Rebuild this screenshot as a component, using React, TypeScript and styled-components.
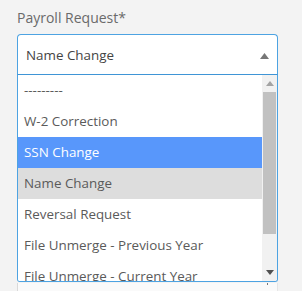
import React from "react";
import styled, { createGlobalStyle } from "styled-components";

const Global = createGlobalStyle`
  html, body { margin: 0; padding: 0; background: #f3f3f3; }
  body { font-family: "Open Sans", "Liberation Sans", sans-serif; }
`;

const Page = styled.div`
  padding: 8px 0 0 17px;
  width: 261px;
  height: 283px;
  overflow: hidden;
`;

const Label = styled.div`
  font-size: 14px;
  color: #6a6a6a;
  line-height: 20px;
  height: 26px;
`;

const Select = styled.div`
  height: 39px;
  border: 1px solid #4da3e2;
  border-bottom-color: #3f95d6;
  border-radius: 4px 4px 0 0;
  background: #fff;
  display: flex;
  align-items: center;
  padding: 0 8px 0 8px;
  font-size: 13.4px;
  color: #444;
`;

const Value = styled.span`
  flex: 1;
`;

const Drop = styled.div`
  height: 206px;
  border: 1px solid #4da3e2;
  border-top: none;
  border-radius: 0 0 3px 3px;
  background: #fff;
  display: flex;
  overflow: hidden;
`;

const List = styled.ul`
  list-style: none;
  margin: 0;
  padding: 0;
  flex: 1;
  overflow: hidden;
`;

const Item = styled.li<{ $state?: "hover" | "selected" }>`
  height: 31px;
  line-height: 31px;
  padding-left: 6px;
  font-size: 13.4px;
  white-space: nowrap;
  color: ${(p) => (p.$state === "hover" ? "#fff" : "#5a5a5a")};
  background: ${(p) =>
    p.$state === "hover" ? "#5897fb" : p.$state === "selected" ? "#dddddd" : "#fff"};
`;

const Scrollbar = styled.div`
  width: 15px;
  background: #f1f1f1;
  display: flex;
  flex-direction: column;
  align-items: center;
`;

const ArrowBtn = styled.div`
  height: 17px;
  width: 15px;
  display: flex;
  align-items: center;
  justify-content: center;
`;

const Thumb = styled.div`
  width: 13px;
  height: 142px;
  background: #c1c1c1;
`;

const Under = styled.div`
  margin-top: 1px;
  height: 10px;
  background: #fafafa;
  border-left: 1px solid #d9d9d9;
  border-right: 1px solid #e6e6e6;
  position: relative;
`;

const Tick = styled.div`
  position: absolute;
  right: 9px;
  top: 0;
  width: 1px;
  height: 2px;
  background: #777;
`;

const Tri = ({ up, color }: { up?: boolean; color: string }) => (
  <svg width="8" height="5" viewBox="0 0 8 5">
    <path d={up ? "M0 5 L4 0 L8 5 Z" : "M0 0 L8 0 L4 5 Z"} fill={color} />
  </svg>
);

export default function App() {
  const items: { text: string; state?: "hover" | "selected" }[] = [
    { text: "---------" },
    { text: "W-2 Correction" },
    { text: "SSN Change", state: "hover" },
    { text: "Name Change", state: "selected" },
    { text: "Reversal Request" },
    { text: "File Unmerge - Previous Year" },
    { text: "File Unmerge - Current Year" },
  ];
  return (
    <>
      <Global />
      <Page>
        <Label>Payroll Request*</Label>
        <Select>
          <Value>Name Change</Value>
          <svg width="9" height="6" viewBox="0 0 9 6" style={{ marginTop: 2 }}>
            <path d="M0 6 L4.5 0 L9 6 Z" fill="#777" />
          </svg>
        </Select>
        <Drop>
          <List>
            {items.map((it) => (
              <Item key={it.text} $state={it.state}>
                {it.text}
              </Item>
            ))}
          </List>
          <Scrollbar>
            <ArrowBtn>
              <Tri up color="#a3a3a3" />
            </ArrowBtn>
            <Thumb />
            <div style={{ flex: 1 }} />
            <ArrowBtn>
              <Tri color="#505050" />
            </ArrowBtn>
          </Scrollbar>
        </Drop>
        <Under>
          <Tick />
        </Under>
      </Page>
    </>
  );
}
